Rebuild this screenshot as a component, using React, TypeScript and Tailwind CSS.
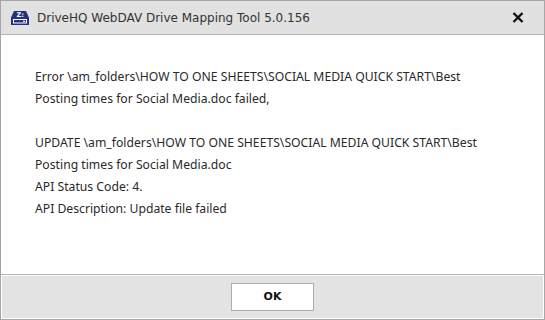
import React from "react";

function DriveIcon() {
  return (
    <svg width="20" height="16" viewBox="0 0 20 16">
      <path d="M4 1 H16 L19 7.5 V15 H1 V7.5 Z" fill="#22327e" />
      <rect x="3.5" y="9.5" width="13" height="3.5" fill="none" stroke="#ffffff" strokeWidth="1" />
      <rect x="13" y="10.7" width="2" height="1.2" fill="#ffffff" />
      <text x="6.5" y="7" fontSize="6.5" fontWeight="bold" fill="#ffffff" fontFamily="DejaVu Sans, sans-serif">Z:</text>
    </svg>
  );
}

export default function App() {
  const body = { fontFamily: '"Noto Sans", "Open Sans", sans-serif' };
  return (
    <div className="w-[545px] h-[320px] bg-white border border-[#a6a6a6] flex flex-col overflow-hidden">
      <div className="h-[34px] shrink-0 bg-[#e1e1e1] border-b border-[#b4b4b4] flex items-center pl-[9px] pr-[20px]">
        <DriveIcon />
        <span
          className="ml-[7px] text-[12px] text-[#333333]"
          style={{ fontFamily: '"DejaVu Sans", Verdana, sans-serif' }}
        >
          DriveHQ WebDAV Drive Mapping Tool 5.0.156
        </span>
        <span className="ml-auto">
          <svg width="12" height="11" viewBox="0 0 12 11">
            <path d="M1.5 1 L10.5 10 M10.5 1 L1.5 10" stroke="#111" strokeWidth="2.4" />
          </svg>
        </span>
      </div>
      <div className="flex-1 pl-[34px] pt-[31px] text-[12.2px] leading-[22px] text-[#2a2a2a]" style={body}>
        <div>Error \am_folders\HOW TO ONE SHEETS\SOCIAL MEDIA QUICK START\Best</div>
        <div>Posting times for Social Media.doc failed,</div>
        <div>&nbsp;</div>
        <div>UPDATE \am_folders\HOW TO ONE SHEETS\SOCIAL MEDIA QUICK START\Best</div>
        <div>Posting times for Social Media.doc</div>
        <div>API Status Code: 4.</div>
        <div>API Description: Update file failed</div>
      </div>
      <div className="h-[45px] shrink-0 border-t border-[#b4b4b4] bg-[#e3e3e3]">
        <div className="h-full border border-white flex items-center justify-center">
          <button
            className="w-[83px] h-[28px] bg-white border border-[#adadad] text-[11px] font-bold text-[#111]"
            style={{ fontFamily: '"DejaVu Sans", Verdana, sans-serif' }}
          >
            OK
          </button>
        </div>
      </div>
    </div>
  );
}
